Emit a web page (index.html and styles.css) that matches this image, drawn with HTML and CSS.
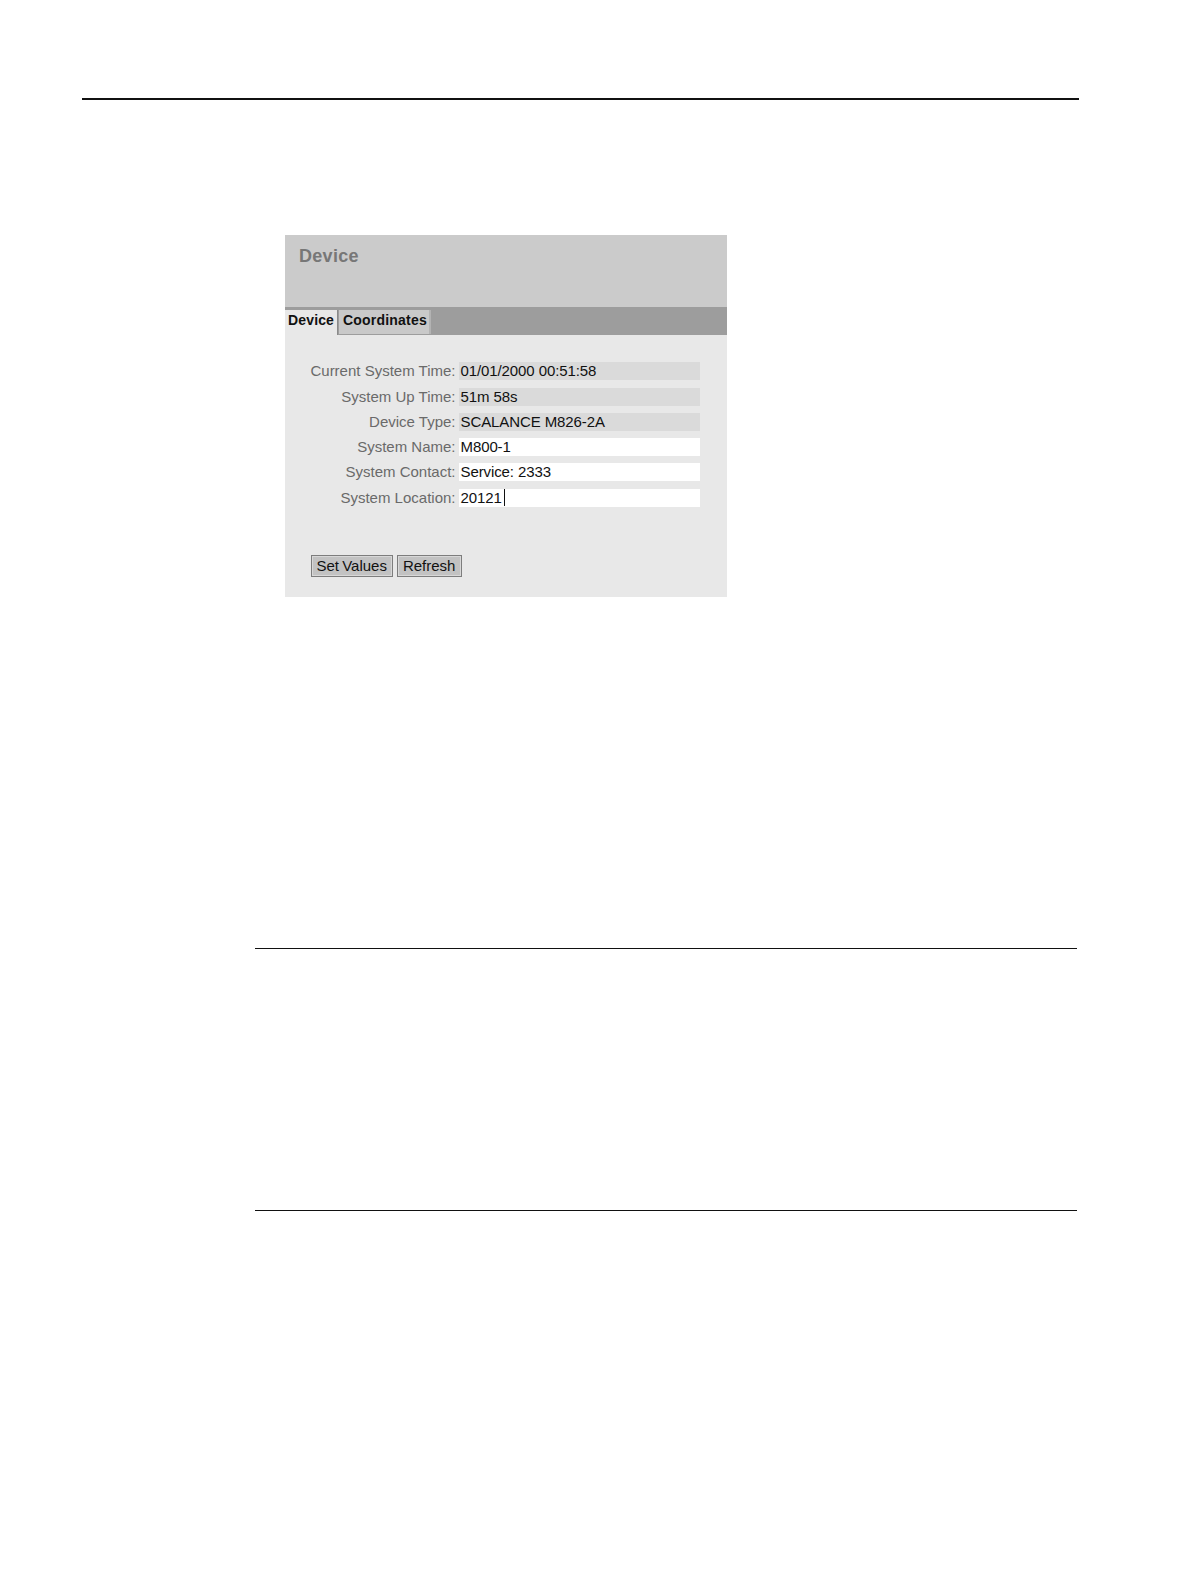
FILE: index.html
```html
<!DOCTYPE html>
<html>
<head>
<meta charset="utf-8">
<link rel="stylesheet" href="styles.css">
</head>
<body>
<div class="page">
  <div class="rule rule-top"></div>
  <div class="panel">
    <div class="panel-head">Device</div>
    <div class="tabbar">
      <div class="tab tab-active">Device</div>
      <div class="tab">Coordinates</div>
    </div>
    <div class="panel-body">
      <div class="form">
        <div class="label">Current System Time:</div><div class="field ro">01/01/2000 00:51:58</div>
        <div class="label">System Up Time:</div><div class="field ro">51m 58s</div>
        <div class="label">Device Type:</div><div class="field ro">SCALANCE M826-2A</div>
        <div class="label">System Name:</div><div class="field rw">M800-1</div>
        <div class="label">System Contact:</div><div class="field rw">Service: 2333</div>
        <div class="label">System Location:</div><div class="field rw">20121<span class="caret"></span></div>
      </div>
      <div class="buttons">
        <button class="btn btn-set">Set Values</button>
        <button class="btn btn-refresh">Refresh</button>
      </div>
    </div>
  </div>
  <div class="rule rule-mid"></div>
  <div class="rule rule-bottom"></div>
</div>
</body>
</html>
```

FILE: styles.css
```css
html, body {
  margin: 0;
  padding: 0;
  background: #ffffff;
}
body {
  font-family: "Liberation Sans", Arial, sans-serif;
  width: 1191px;
  height: 1587px;
  overflow: hidden;
}
.page {
  padding-top: 98px;
  display: flex;
  flex-direction: column;
}
.rule {
  height: 1.5px;
  background: #111;
}
.rule-top {
  margin-left: 82px;
  width: 997px;
}
.panel {
  margin-top: 135.5px;
  margin-left: 285px;
  width: 442px;
  background: #e8e8e8;
  display: flex;
  flex-direction: column;
}
.panel-head {
  height: 72px;
  box-sizing: border-box;
  background: #cbcbcb;
  color: #777;
  font-weight: bold;
  font-size: 18px;
  padding: 11px 0 0 14px;
  letter-spacing: 0.3px;
}
.tabbar {
  height: 28px;
  background: #9d9d9d;
  display: flex;
  align-items: flex-end;
}
.tab {
  font-size: 14px;
  font-weight: bold;
  color: #111;
  height: 24px;
  box-sizing: border-box;
  padding: 2px 4px 0 4px;
  background: #c9c9c9;
  border-right: 2px solid #b3b3b3;
  margin-bottom: 1px;
  letter-spacing: 0.2px;
  width: 92px;
}
.tab-active {
  width: 53px;
  height: 25px;
  margin-bottom: 0;
  background: #e8e8e8;
  border-right: 1px solid #8a8a8a;
  margin-right: 1px;
  padding: 2px 0 0 3px;
  letter-spacing: 0.15px;
}
.panel-body {
  padding: 27.3px 0 20px 0;
  display: flex;
  flex-direction: column;
}
.form {
  display: grid;
  grid-template-columns: 170.5px 241px;
  column-gap: 3px;
  row-gap: 7.3px;
}
.label {
  text-align: right;
  font-size: 15px;
  color: #6a6a6a;
  height: 18px;
  line-height: 18px;
}
.field {
  height: 18px;
  font-size: 15px;
  color: #111;
  padding: 0 0 0 2px;
  box-sizing: border-box;
  line-height: 18px;
  display: flex;
  align-items: center;
  letter-spacing: -0.1px;
}
.ro {
  background: #dadada;
}
.rw {
  background: #ffffff;
}
.caret {
  display: inline-block;
  width: 1.5px;
  height: 17px;
  background: #111;
  margin-left: 2px;
}
.buttons {
  margin-top: 47.8px;
  padding-left: 25.7px;
  display: flex;
  gap: 4px;
}
.btn {
  font-family: "Liberation Sans", Arial, sans-serif;
  font-size: 15px;
  color: #111;
  background: #c2c2c2;
  border: 1px solid #7d7d7d;
  box-shadow: inset 0 0 0 1px #d8d8d8;
  height: 22.4px;
  padding: 0;
  margin: 0;
  border-radius: 0;
}
.btn-set {
  width: 82px;
  word-spacing: -1px;
}
.btn-refresh {
  width: 65px;
}
.rule-mid {
  margin-top: 350.7px;
  margin-left: 255px;
  width: 822px;
}
.rule-bottom {
  margin-top: 260.5px;
  margin-left: 255px;
  width: 822px;
}
```
